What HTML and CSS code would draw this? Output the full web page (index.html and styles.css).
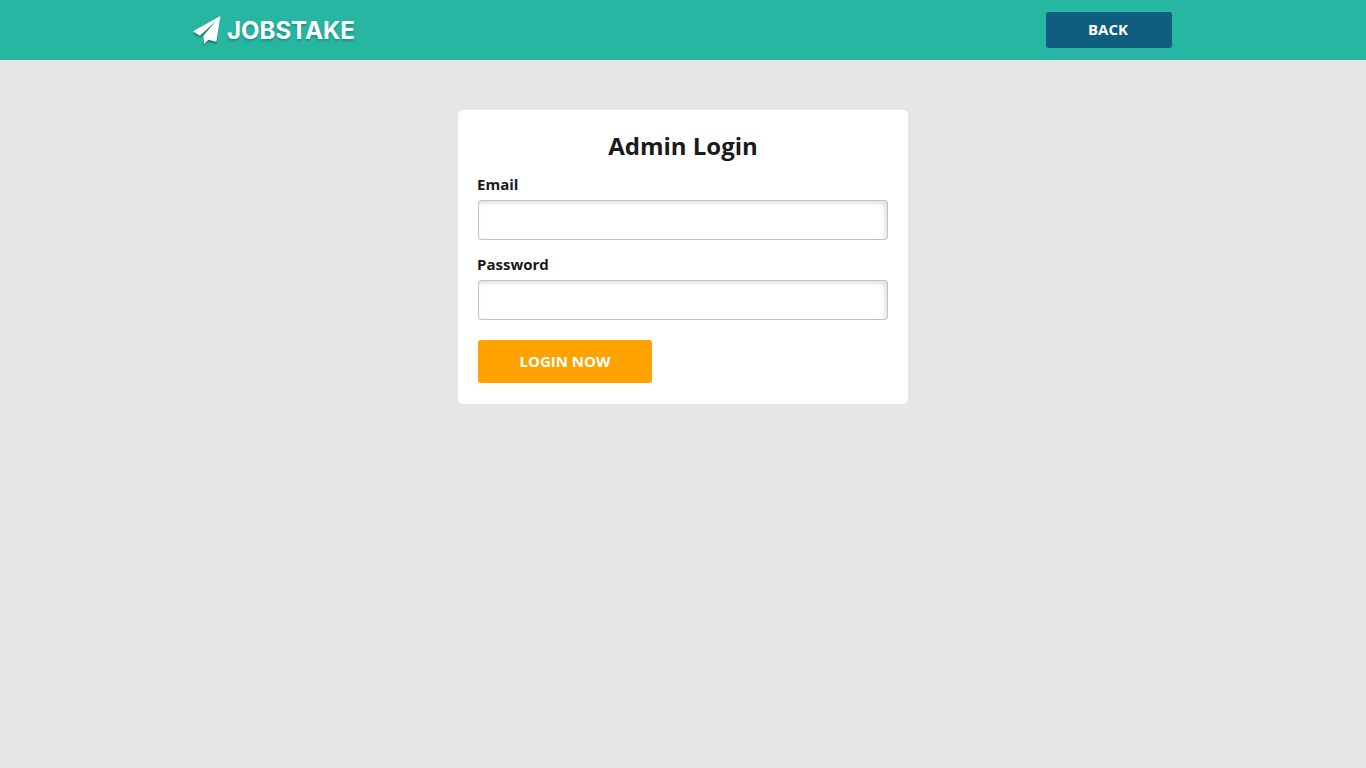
FILE: index.html
```html
<!DOCTYPE html>
<html lang="en">
<head>
<meta charset="utf-8">
<meta name="viewport" content="width=device-width, initial-scale=1">
<title>Admin Login</title>
<link rel="stylesheet" href="styles.css">
</head>
<body>
<header class="header">
  <div class="header-inner">
    <a class="logo" href="#">
      <svg class="logo-icon" viewBox="0 0 28 32" aria-hidden="true">
        <path class="logo-shade" d="M27 3 0 18.500 6.500 22.500 10.500 20.500V31l4.500-4 8.500 2L27 3z"/>
        <path class="logo-plane" d="M27.500 1 0 16.300 6.800 20.800 23 6 10.500 20.500 11 29.300l4.300-4.500 8 2z"/>
      </svg>
      <span class="logo-text">JOBSTAKE</span>
    </a>
    <button class="button button-back" type="button">BACK</button>
  </div>
</header>
<main class="main">
  <form class="card">
    <h1 class="title">Admin Login</h1>
    <label class="label" for="email">Email</label>
    <input class="input" id="email" type="email">
    <label class="label" for="password">Password</label>
    <input class="input" id="password" type="password">
    <button class="button button-login" type="submit">LOGIN NOW</button>
  </form>
</main>
</body>
</html>
```
FILE: styles.css
```css
* { box-sizing: border-box; }
body { margin: 0; background: #e6e6e6; color: #1a1a1a; font-family: "Open Sans", sans-serif; font-size: 15px; }
.header { background: #27b6a2; }
.header-inner { display: flex; align-items: center; justify-content: space-between; max-width: 980px; height: 60px; margin: 0 auto; padding-right: 1px; }
.logo { display: flex; align-items: center; gap: 6px; padding-top: 2px; color: #fff; text-decoration: none; }
.logo-icon { width: 28px; height: 32px; }
.logo-shade { fill: #198474; }
.logo-plane { fill: #fff; }
.logo-text { font: 700 24px/32px Inter, sans-serif; text-shadow: 0 2px 2px rgba(0, 70, 60, 0.3); }
.button { border: 0; border-radius: 3px; color: #fff; font: 700 15px/20px "Open Sans", sans-serif; cursor: pointer; }
.button-back { width: 126px; padding: 7px 10px 9px 8px; background: #0f5e80; }
.main { padding: 50px 16px; }
.card { max-width: 450px; margin: 0 auto; padding: 20px 20px 21px; background: #fff; border-radius: 5px; }
.title { margin: 0 0 12px; font-size: 24px; line-height: 32px; text-align: center; }
.label { display: block; margin: 0 0 6px -1px; font-weight: 700; line-height: 20px; }
.input { display: block; width: 100%; height: 40px; margin-bottom: 14px; padding: 8px 12px; border: 1px solid #c3c1c3; border-radius: 3px; background: #fff; box-shadow: inset -2px 2px 5px #ddd; font: inherit; }
.button-login { display: block; width: 174px; margin-top: 20px; padding: 11px 12px 12px; background: #ffa200; }
```
